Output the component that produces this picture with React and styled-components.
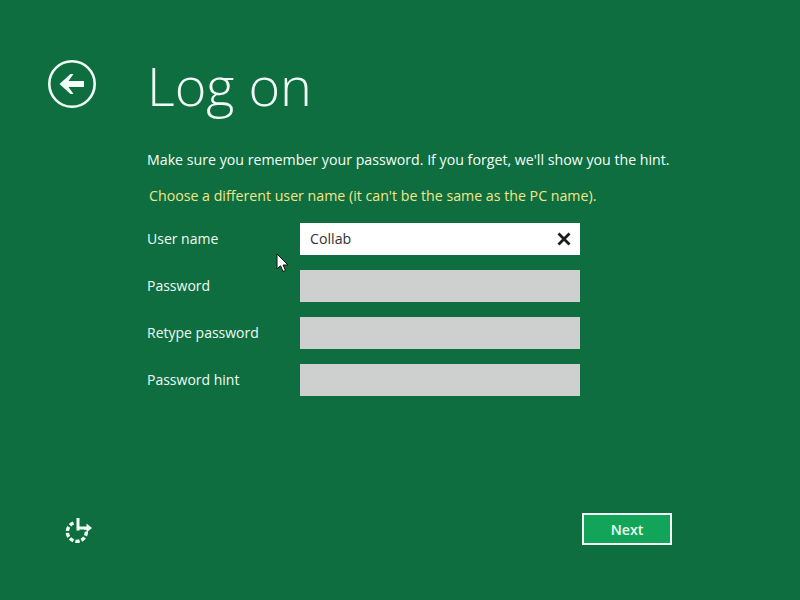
import React from "react";
import styled, { createGlobalStyle } from "styled-components";

const Global = createGlobalStyle`
  html, body { margin: 0; padding: 0; }
  body { font-family: "Open Sans", "Noto Sans", sans-serif; background: #0f6e40; }
`;

const Page = styled.div`
  position: relative;
  width: 800px;
  height: 600px;
  overflow: hidden;
  background: #0f6e40;
  color: #fff;
  display: flex;
  flex-direction: column;
`;

const Header = styled.header`
  display: flex;
  align-items: center;
  height: 48px;
  margin-top: 60px;
  padding-left: 48px;
`;

const BackButton = styled.button`
  width: 48px;
  height: 48px;
  padding: 0;
  border: none;
  background: none;
  display: block;
`;

const Title = styled.h1`
  margin: 0 0 0 51px;
  font-size: 54px;
  font-weight: 300;
  line-height: 48px;
  color: #f2fff6;
  position: relative;
  top: 1px;
`;

const Content = styled.main`
  flex: 1;
  display: flex;
  flex-direction: column;
  padding-left: 147px;
`;

const Intro = styled.p`
  margin: 42px 0 0;
  font-size: 14.2px;
  line-height: 20px;
  color: #f4fff8;
`;

const Warning = styled.p`
  margin: 16px 0 0 2px;
  font-size: 14.2px;
  line-height: 20px;
  color: #f0e68a;
`;

const Form = styled.form`
  margin-top: 17px;
  display: flex;
  flex-direction: column;
  gap: 15px;
`;

const Row = styled.div`
  display: flex;
  align-items: center;
  height: 32px;
`;

const Label = styled.label`
  width: 153px;
  margin-bottom: 2px;
  font-size: 14px;
  color: #f0fbf4;
`;

const Field = styled.div`
  width: 280px;
  height: 32px;
  box-sizing: border-box;
  padding: 0 9px 0 10px;
  display: flex;
  align-items: center;
  justify-content: space-between;
  background: ${(p) => (p.$active ? "#ffffff" : "#cdd0ce")};
  color: #333;
  font-size: 14.2px;
`;

const FieldValue = styled.span`
  margin-bottom: 2px;
`;

const Clear = styled.svg`
  width: 14px;
  height: 14px;
  display: block;
`;

const Footer = styled.footer`
  display: flex;
  align-items: center;
  justify-content: space-between;
  padding: 0 128px 55px 65px;
`;

const EaseIcon = styled.svg`
  width: 28px;
  height: 28px;
  display: block;
`;

const NextButton = styled.button`
  width: 90px;
  height: 32px;
  box-sizing: border-box;
  padding: 0;
  border: 2px solid #f2fff6;
  background: #12a458;
  color: #eafff2;
  font-family: inherit;
  font-size: 14.2px;
  font-weight: 600;
`;

const Cursor = styled.svg`
  position: absolute;
  left: 276px;
  top: 253px;
  width: 13px;
  height: 20px;
`;

const fields = [
  { label: "User name", value: "Collab", active: true },
  { label: "Password" },
  { label: "Retype password" },
  { label: "Password hint" },
];

export default function App() {
  return (
    <Page>
      <Global />
      <Header>
        <BackButton aria-label="Back">
          <svg width="48" height="48" viewBox="0 0 48 48">
            <circle cx="24" cy="24" r="22.7" fill="none" stroke="#f2fff6" strokeWidth="2.6" />
            <path d="M11.5 24 L22.5 14 L25.5 14 L20.5 21 L36 21 L36 27 L20.5 27 L25.5 34 L22.5 34 Z" fill="#f2fff6" />
          </svg>
        </BackButton>
        <Title>Log on</Title>
      </Header>
      <Content>
        <Intro>Make sure you remember your password. If you forget, we'll show you the hint.</Intro>
        <Warning>Choose a different user name (it can't be the same as the PC name).</Warning>
        <Form>
          {fields.map((f) => (
            <Row key={f.label}>
              <Label>{f.label}</Label>
              <Field $active={f.active}>
                <FieldValue>{f.value}</FieldValue>
                {f.active && (
                  <Clear viewBox="0 0 14 14">
                    <path d="M1.5 1.5 L12.5 12.5 M12.5 1.5 L1.5 12.5" stroke="#1c1c1c" strokeWidth="2.8" />
                  </Clear>
                )}
              </Field>
            </Row>
          ))}
        </Form>
      </Content>
      <Footer>
        <EaseIcon viewBox="0 0 28 28">
          <path d="M8.5 8 A9.5 9.5 0 1 0 20.5 13" fill="none" stroke="#f2fff6" strokeWidth="3.4" strokeDasharray="4.2 2" />
          <path d="M13 3 V15.5 M13 13 H22" fill="none" stroke="#f2fff6" strokeWidth="3" />
          <path d="M21.5 8.5 L27 13 L21.5 17.5 Z" fill="#f2fff6" />
        </EaseIcon>
        <NextButton type="button">Next</NextButton>
      </Footer>
      <Cursor viewBox="0 0 13 20">
        <path d="M1 1 V16 L4.5 12.8 L7 18.5 L9.5 17.4 L7 12 L12 12 Z" fill="#fff" stroke="#111" strokeWidth="1" />
      </Cursor>
    </Page>
  );
}
